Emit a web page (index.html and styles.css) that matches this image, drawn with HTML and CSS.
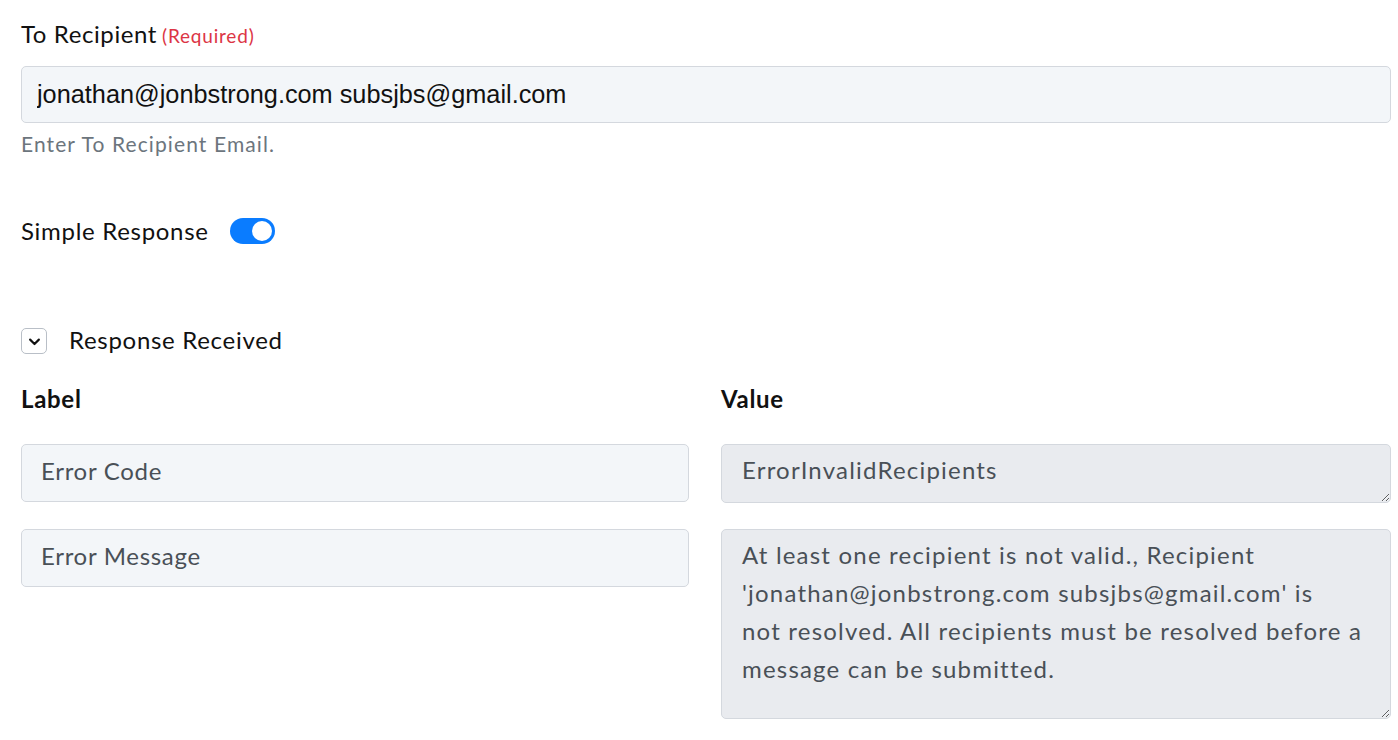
FILE: index.html
```html
<!DOCTYPE html>
<html lang="en">
<head>
<meta charset="utf-8">
<title>Send Email Step</title>
<link rel="stylesheet" href="styles.css">
</head>
<body>
<div class="page">
  <div class="field-label">To Recipient<span class="required">(Required)</span></div>
  <input class="email-input" type="text" value="jonathan@jonbstrong.com subsjbs@gmail.com">
  <div class="help">Enter To Recipient Email.</div>

  <div class="switch-row">
    <span class="switch-text">Simple Response</span>
    <span class="switch"><span class="knob"></span></span>
  </div>

  <div class="collapse-row">
    <span class="chev-box">
      <svg viewBox="0 0 24 24" width="15" height="15"><polyline points="5,9 12,16 19,9" fill="none" stroke="#111" stroke-width="3.4" stroke-linecap="round" stroke-linejoin="round"/></svg>
    </span>
    <span class="collapse-text">Response Received</span>
  </div>

  <div class="grid">
    <div class="col-head">Label</div>
    <div class="col-head">Value</div>
    <input class="box" type="text" value="Error Code" readonly>
    <textarea class="box ro short" readonly>ErrorInvalidRecipients</textarea>
    <input class="box" type="text" value="Error Message" readonly>
    <textarea class="box ro tall" readonly>At least one recipient is not valid., Recipient
'jonathan@jonbstrong.com subsjbs@gmail.com' is
not resolved. All recipients must be resolved before a
message can be submitted.</textarea>
  </div>
</div>
</body>
</html>
```
FILE: styles.css
```css
* { box-sizing: border-box; }
body {
  margin: 0;
  background: #fff;
  font-family: "Lato", "Noto Sans", sans-serif;
  color: #111;
}
.page {
  padding: 17px 7px 0 21px;
}
.field-label {
  font-size: 24px;
  line-height: 34px;
  letter-spacing: 0.6px;
  color: #111;
}
.required {
  color: #dc3545;
  font-size: 19px;
  line-height: 1;
  letter-spacing: 0.8px;
  margin-left: 5px;
}
.email-input {
  display: block;
  width: 100%;
  height: 57px;
  margin-top: 15px;
  padding: 0 15px;
  border: 1px solid #d4d8de;
  border-radius: 5px;
  background: #f3f6f9;
  font-family: "Liberation Sans", Arial, sans-serif;
  font-size: 25.3px;
  color: #111;
  outline: none;
}
.help {
  margin-top: 6px;
  font-size: 21px;
  line-height: 30px;
  letter-spacing: 1.1px;
  color: #6c757d;
}
.switch-row {
  display: flex;
  align-items: center;
  gap: 21px;
  height: 36px;
  margin-top: 54px;
}
.switch-text, .collapse-text {
  font-size: 24px;
  line-height: 34px;
  letter-spacing: 0.7px;
}
.collapse-text { margin-top: -3px; }
.switch {
  position: relative;
  width: 45px;
  height: 26px;
  border-radius: 13px;
  background: #0a7cff;
}
.knob {
  position: absolute;
  right: 3px;
  top: 3px;
  width: 20px;
  height: 20px;
  border-radius: 50%;
  background: #fff;
}
.collapse-row {
  display: flex;
  align-items: center;
  gap: 22px;
  height: 36px;
  margin-top: 74px;
}
.chev-box {
  display: flex;
  align-items: center;
  justify-content: center;
  width: 26px;
  height: 26px;
  border: 1px solid #b9bfc7;
  border-radius: 5px;
}
.chev-box svg { display: block; margin-top: 1px; }
.grid {
  display: grid;
  grid-template-columns: 668fr 670fr;
  column-gap: 32px;
  row-gap: 26px;
  margin-top: 23px;
}
.col-head {
  font-size: 24px;
  line-height: 34px;
  letter-spacing: 0.7px;
  font-weight: 700;
  margin-bottom: 2px;
}
.box {
  display: block;
  width: 100%;
  height: 58px;
  margin: 0;
  padding: 0 19px 6px;
  border: 1px solid #d4d8de;
  border-radius: 5px;
  background: #f3f6f9;
  font-family: "Lato", "Noto Sans", sans-serif;
  font-size: 24px;
  letter-spacing: 0.7px;
  color: #495057;
  outline: none;
}
.ro {
  background: #e9ebef;
  padding: 6px 10px 6px 20px;
  line-height: 38px;
  letter-spacing: 1.2px;
  resize: vertical;
}
.short { height: 59px; }
.tall { height: 190px; }
```
